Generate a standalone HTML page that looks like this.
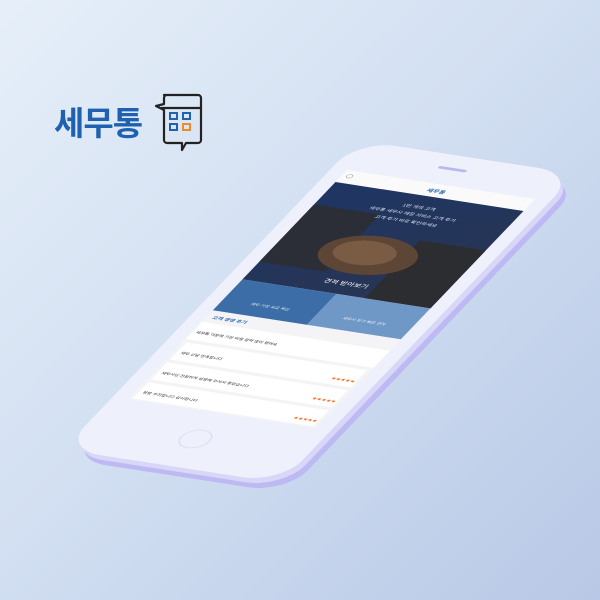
<!DOCTYPE html>
<html><head><meta charset="utf-8"><style>
html,body{margin:0;padding:0}
body{width:600px;height:600px;overflow:hidden;background:linear-gradient(135deg,#e6eff9 0%,#d3e0f2 45%,#b8c8e6 100%);position:relative;font-family:"Liberation Sans","Noto Sans CJK KR",sans-serif}
.logo{position:absolute;left:54px;top:97px;font-size:33px;font-weight:bold;color:#1f61b0;letter-spacing:-1px;font-family:"Noto Sans CJK KR","NanumGothic",sans-serif}
</style></head><body>
<div class="logo">세무통</div>
<svg width="600" height="600" style="position:absolute;left:0;top:0" xmlns="http://www.w3.org/2000/svg">
<defs>
<linearGradient id="hg" x1="0" y1="0" x2="1" y2="1">
<stop offset="0" stop-color="#1e3564"/><stop offset="1" stop-color="#2a3550"/>
</linearGradient>
</defs>
<g fill="none" stroke="#222" stroke-width="2.2" stroke-linejoin="round">
<path d="M164 95 h34 a3 3 0 0 1 3 3 v42 a3 3 0 0 1 -3 3 h-12 l-4 7 v-7 h-15 a3 3 0 0 1 -3 -3 v-30 l-8 -4 l8 -2 v-6 a3 3 0 0 1 3 -3z"/>
<line x1="161" y1="108" x2="201" y2="108"/>
</g>
<g stroke-width="2">
<rect x="170" y="113" width="7" height="6" fill="none" stroke="#1f61b0"/>
<rect x="183" y="113" width="7" height="6" fill="none" stroke="#1f61b0"/>
<rect x="170" y="124" width="7" height="6" fill="none" stroke="#1f61b0"/>
<rect x="183" y="124" width="7" height="6" fill="none" stroke="#f08a24"/>
</g>
<g transform="matrix(0.94,0.145,-0.5475,0.5725,347,170)">
<rect x="-16" y="-48" width="232" height="540" rx="40" fill="#bdb9f3" transform="translate(14,14)"/>
<rect x="-16" y="-48" width="232" height="540" rx="40" fill="#d8d7f8" transform="translate(7,7)"/>
<rect x="-16" y="-48" width="232" height="540" rx="40" fill="#eef1fc"/>
<rect x="82" y="-28" width="30" height="4" rx="2" fill="#b7b8ee"/>
<circle cx="98" cy="445" r="15" fill="none" stroke="#dcdff5" stroke-width="1.5"/>
<rect x="0" y="0" width="200" height="400" fill="#f4f4f6"/>
<rect x="0" y="0" width="200" height="21" fill="#fafafa"/>
<text x="92" y="14" font-size="7" fill="#1f61b0" font-weight="bold">세무통</text>
<circle cx="8" cy="9" r="3" fill="none" stroke="#aaa" stroke-width="0.8"/>
<rect x="0" y="21" width="200" height="170" fill="url(#hg)"/>
<rect x="0" y="60" width="70" height="100" fill="#2b2e36"/>
<rect x="130" y="90" width="70" height="101" fill="#2c2d31"/>
<ellipse cx="95" cy="125" rx="50" ry="32" fill="#5e4636"/>
<ellipse cx="90" cy="122" rx="32" ry="20" fill="#7a5c45"/>
<text x="100" y="42" font-size="6" fill="#dfe4f0" text-anchor="middle">1만 개의 고객</text>
<text x="100" y="54" font-size="6" fill="#dfe4f0" text-anchor="middle">세무통 세무사 매칭 서비스 고객 후기</text>
<text x="100" y="66" font-size="6" fill="#dfe4f0" text-anchor="middle">고객 후기 바로 확인하세요</text>
<text x="100" y="176" font-size="8" fill="#fff" text-anchor="middle">견적 받아보기</text>
<rect x="0" y="191" width="100" height="54" fill="#3c6da6"/>
<rect x="100" y="191" width="100" height="54" fill="#6f98c6"/>
<text x="50" y="228" font-size="5" fill="#e8eef8" text-anchor="middle">세무 기장 요금 계산</text>
<text x="150" y="228" font-size="5" fill="#e8eef8" text-anchor="middle">세무사 찾기 빠른 견적</text>
<text x="6" y="258" font-size="6" fill="#1f61b0" font-weight="bold">고객 생생 후기</text>
<g font-size="5" fill="#222">
<rect x="0" y="265" width="200" height="30" fill="#fff"/>
<text x="4" y="284">세무통 덕분에 기장 비용 절약 많이 했어요</text>
<rect x="4" y="300" width="192" height="30" fill="#fff"/>
<text x="8" y="319">세무 상담 만족합니다</text>
<text x="170" y="322" fill="#f06b1e">★★★★★</text>
<rect x="4" y="335" width="192" height="30" fill="#fff"/>
<text x="8" y="354">세무사님 친절하게 설명해 주셔서 좋았습니다</text>
<text x="170" y="357" fill="#f06b1e">★★★★★</text>
<rect x="4" y="370" width="192" height="28" fill="#fff"/>
<text x="8" y="388">정말 추천합니다 감사합니다</text>
<text x="170" y="391" fill="#f06b1e">★★★★★</text>
</g>
</g>
</svg>
</body></html>
